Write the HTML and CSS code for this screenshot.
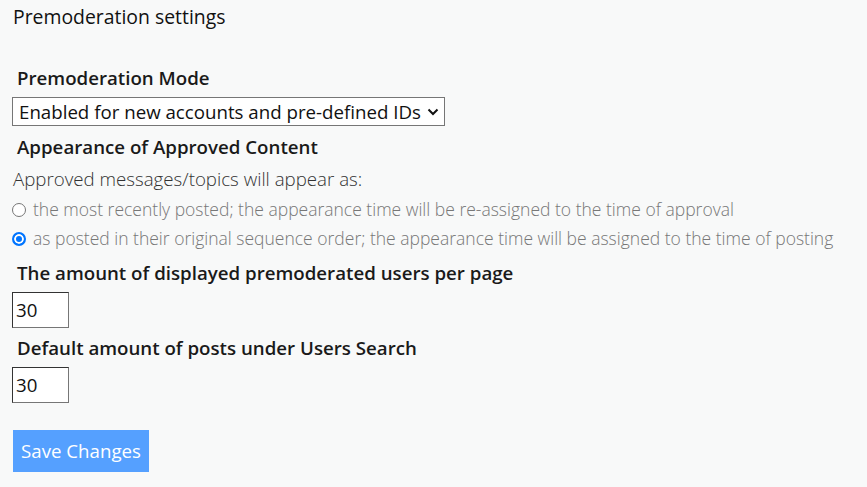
FILE: index.html
```html
<!DOCTYPE html>
<html>
<head>
<meta charset="utf-8">
<link rel="stylesheet" href="styles.css">
</head>
<body>
<div class="page">
  <h1 class="title">Premoderation settings</h1>
  <form class="form">
    <h2 class="label mode-label">Premoderation Mode</h2>
    <div class="select">
      <span class="select-text">Enabled for new accounts and pre-defined IDs</span>
      <svg class="chev" width="12" height="8" viewBox="0 0 12 8"><path d="M1.5 1.5 L6 6 L10.5 1.5" fill="none" stroke="#111" stroke-width="2"/></svg>
    </div>
    <h2 class="label appear-label">Appearance of Approved Content</h2>
    <p class="hint">Approved messages/topics will appear as:</p>
    <label class="radio-row"><span class="radio"></span><span class="radio-text">the most recently posted; the appearance time will be re-assigned to the time of approval</span></label>
    <label class="radio-row"><span class="radio checked"></span><span class="radio-text">as posted in their original sequence order; the appearance time will be assigned to the time of posting</span></label>
    <h2 class="label amount-label">The amount of displayed premoderated users per page</h2>
    <div class="num">30</div>
    <h2 class="label default-label">Default amount of posts under Users Search</h2>
    <div class="num">30</div>
    <div class="btn">Save Changes</div>
  </form>
</div>
</body>
</html>
```

FILE: styles.css
```css
html, body {
  margin: 0;
  padding: 0;
  background: #f8f9f9;
}
.page {
  font-family: "Open Sans", sans-serif;
  color: #1a1a1a;
  padding: 4px 12px 0 13px;
}
.title {
  margin: 0;
  font-size: 19.4px;
  font-weight: 400;
  line-height: 26px;
  color: #111;
}
.form {
  display: flex;
  flex-direction: column;
  align-items: flex-start;
}
.label {
  margin: 0;
  font-size: 18.7px;
  font-weight: 600;
  line-height: 26px;
  padding-left: 4px;
}
.mode-label { margin-top: 35px; }
.select {
  margin-top: 6px;
  margin-left: -1px;
  box-sizing: border-box;
  height: 29px;
  width: 433px;
  border: 1px solid #767676;
  background: #fff;
  display: flex;
  align-items: center;
  padding: 0 5px 0 6px;
  font-size: 18.7px;
  color: #111;
}
.select-text { flex: 1; white-space: nowrap; }
.chev { margin-top: 1px; }
.appear-label { margin-top: 8px; }
.hint {
  margin: 6px 0 0 0;
  font-size: 18.7px;
  font-weight: 300;
  color: #333;
  line-height: 26px;
}
.radio-row {
  display: flex;
  align-items: center;
  margin-top: 5px;
  font-size: 17.5px;
  font-weight: 300;
  color: #777;
  line-height: 24px;
  white-space: nowrap;
}
.radio {
  box-sizing: border-box;
  width: 14px;
  height: 14px;
  border-radius: 50%;
  border: 1px solid #767676;
  background: #fff;
  margin: 1px 7px 0 -1px;
  flex: none;
}
.radio.checked {
  border: 2px solid #0075ff;
  background: #0075ff;
  box-shadow: inset 0 0 0 2px #fff;
}
.amount-label { margin-top: 10px; }
.default-label { margin-top: 7px; }
.num {
  margin-top: 6px;
  margin-left: -1px;
  box-sizing: border-box;
  width: 57px;
  height: 36px;
  border: 1px solid #767676;
  border-top-color: #333;
  border-left-color: #333;
  background: #fff;
  font-size: 18.7px;
  line-height: 34px;
  padding-left: 3px;
  color: #111;
}
.btn {
  margin-top: 27px;
  box-sizing: border-box;
  width: 136px;
  height: 42px;
  background: #55a0ff;
  color: #fff;
  font-size: 18.7px;
  line-height: 42px;
  text-align: center;
}
```
